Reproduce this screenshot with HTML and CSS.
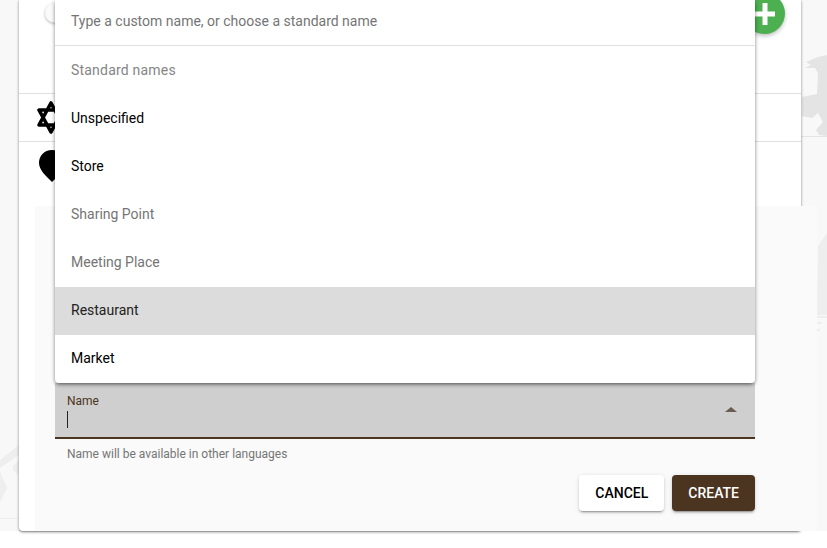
FILE: index.html
```html
<!DOCTYPE html>
<html>
  <head>
    <link rel="stylesheet" href="styles.css">
  </head>
  <body>
    <div class="page">
      <svg class="backdrop" viewBox="0 0 827 531" width="827" height="531">
        <!-- rider, right side -->
        <path class="shape-dark" d="M827 55 L818 57 L806 62 L811 65 L805 68 L815 68 L818 73 L817 94 L802 97 L802 116 L812 118 L818 113 L823 122 L816 130 L819 135 L827 136 Z"/>
        <rect class="shape-dark" x="801" y="136" width="26" height="1"/>
        <path class="shape-light" d="M827 233 L818 246 L817 315 L827 315 Z"/>
        <rect class="shape-light" x="817" y="316" width="10" height="2"/>
        <rect class="shape-light" x="817" y="322" width="5" height="2"/>
        <rect class="shape-light" x="817" y="329" width="3" height="2"/>
        <!-- street shapes, left side -->
        <path class="shape-light" d="M0 468 L19 455 L19 445 L0 460 Z"/>
        <path class="shape-light" d="M19 460 L13 466 L13 470 L19 476 Z"/>
        <path class="shape-light" d="M0 472 L7 488 L0 502 Z"/>
        <rect class="shape-light" x="0" y="518" width="19" height="1"/>
      </svg>

      <div class="card">
        <div class="card-top">
          <span class="thumb"></span>
          <button class="fab">
            <svg viewBox="0 0 20 22" width="20" height="22"><path d="M10 0 V22 M0 11 H20" /></svg>
          </button>
        </div>
        <div class="card-row">
          <svg class="row-icon" viewBox="0 0 32 34" width="32" height="34">
            <path class="star" d="M16 3 L28 25 L4 25 Z M16 32 L4 10 L28 10 Z"/>
          </svg>
        </div>
        <div class="card-row last">
          <svg class="row-icon" viewBox="0 0 32 34" width="32" height="34">
            <path d="M17 2 C9 2 4 8 4 15 C4 22 11 28 17 34 C23 28 30 22 30 15 C30 8 25 2 17 2 Z"/>
          </svg>
        </div>
      </div>

      <div class="panel">
        <div class="field">
          <div class="field-text">
            <label class="field-label">Name</label>
            <span class="caret"></span>
          </div>
          <span class="arrow"></span>
        </div>
        <p class="helper">Name will be available in other languages</p>
        <div class="actions">
          <button class="btn">CANCEL</button>
          <button class="btn btn-primary">CREATE</button>
        </div>
      </div>

      <div class="menu">
        <div class="menu-search">Type a custom name, or choose a standard name</div>
        <div class="menu-item muted heading">Standard names</div>
        <div class="menu-item">Unspecified</div>
        <div class="menu-item">Store</div>
        <div class="menu-item muted">Sharing Point</div>
        <div class="menu-item muted">Meeting Place</div>
        <div class="menu-item active">Restaurant</div>
        <div class="menu-item">Market</div>
      </div>
    </div>
  </body>
</html>
```

FILE: styles.css
```css
* {
  margin: 0;
  padding: 0;
  box-sizing: border-box;
}
html, body {
  height: 548px;
  overflow: hidden;
}
body {
  background-color: #fff;
  font-family: Roboto, "Liberation Sans", sans-serif;
  font-size: 14px;
}
.page {
  position: relative;
  height: 531px;
  padding-left: 19px;
  background-color: #f8f8f8;
}
.backdrop {
  position: absolute;
  top: 0;
  left: 0;
}
.shape-dark {
  fill: #e4e4e4;
}
.shape-light {
  fill: #eeeeee;
}
.card {
  position: relative;
  width: 782px;
  height: 531px;
  background-color: #fff;
  border-radius: 0 0 4px 4px;
  box-shadow: 0 1px 3px rgba(0, 0, 0, .45), 0 1px 1px rgba(0, 0, 0, .14);
}
.card-top {
  position: relative;
  height: 94px;
  border-bottom: 1px solid #e0e0e0;
}
.card-row {
  height: 48px;
  padding: 6px 0 0 16px;
  border-bottom: 1px solid #e0e0e0;
}
.card-row.last {
  border-bottom: none;
}
.row-icon {
  display: block;
  fill: #000;
}
.star {
  fill: none;
  stroke: #000;
  stroke-width: 3.6;
  stroke-linejoin: round;
}
.thumb {
  position: absolute;
  top: 3px;
  left: 26px;
  width: 20px;
  height: 20px;
  border-radius: 50%;
  background-color: #fafafa;
  box-shadow: 0 1px 3px rgba(0, 0, 0, .3);
}
.fab {
  position: absolute;
  top: -7px;
  left: 725px;
  width: 41px;
  height: 41px;
  display: flex;
  align-items: center;
  justify-content: center;
  border: none;
  border-radius: 50%;
  background-color: #4caf50;
  box-shadow: 0 2px 4px rgba(0, 0, 0, .25);
}
.fab svg {
  fill: none;
  stroke: #fff;
  stroke-width: 5;
}
.panel {
  position: absolute;
  top: 206px;
  left: 35px;
  width: 782px;
  height: 325px;
  padding: 177px 62px 0 20px;
  background-color: #fafafa;
}
.field {
  display: flex;
  align-items: center;
  justify-content: space-between;
  height: 56px;
  padding: 0 18px 0 12px;
  background-color: #cfcfcf;
  border-bottom: 2px solid #4b3420;
}
.field-text {
  display: flex;
  flex-direction: column;
}
.field-label {
  font-size: 12px;
  line-height: 16px;
  color: #4b3420;
}
.caret {
  display: block;
  width: 1px;
  height: 17px;
  margin-top: 2px;
  background-color: #222;
}
.arrow {
  width: 0;
  height: 0;
  border-left: 6px solid transparent;
  border-right: 6px solid transparent;
  border-bottom: 5px solid #6a5c50;
  margin-bottom: 2px;
}
.helper {
  padding: 7px 12px 0;
  font-size: 12px;
  line-height: 16px;
  color: #757575;
}
.actions {
  display: flex;
  justify-content: flex-end;
  gap: 8px;
  margin-top: 13px;
}
.btn {
  height: 36px;
  padding: 0 16px;
  border: none;
  border-radius: 4px;
  background-color: #fff;
  color: #000;
  font-family: inherit;
  font-size: 14px;
  font-weight: 500;
  box-shadow: 0 3px 1px -2px rgba(0, 0, 0, .2), 0 2px 2px rgba(0, 0, 0, .14), 0 1px 5px rgba(0, 0, 0, .12);
}
.btn-primary {
  background-color: #4b3420;
  color: #fff;
}
.menu {
  position: absolute;
  top: 0;
  left: 55px;
  width: 700px;
  background-color: #fff;
  border-radius: 0 0 4px 4px;
  box-shadow: 0 2px 4px -1px rgba(0, 0, 0, .6), 0 0 5px rgba(0, 0, 0, .14);
}
.menu-search {
  height: 46px;
  margin-bottom: 1px;
  padding: 13px 16px 0;
  line-height: 16px;
  color: #757575;
  border-bottom: 1px solid #e0e0e0;
}
.menu-item {
  display: flex;
  align-items: center;
  height: 48px;
  padding: 0 16px 2px;
  color: #000;
}
.muted {
  color: #757575;
}
.heading {
  letter-spacing: .2px;
  color: #858585;
}
.active {
  background-color: #dcdcdc;
  color: #212121;
}
```
